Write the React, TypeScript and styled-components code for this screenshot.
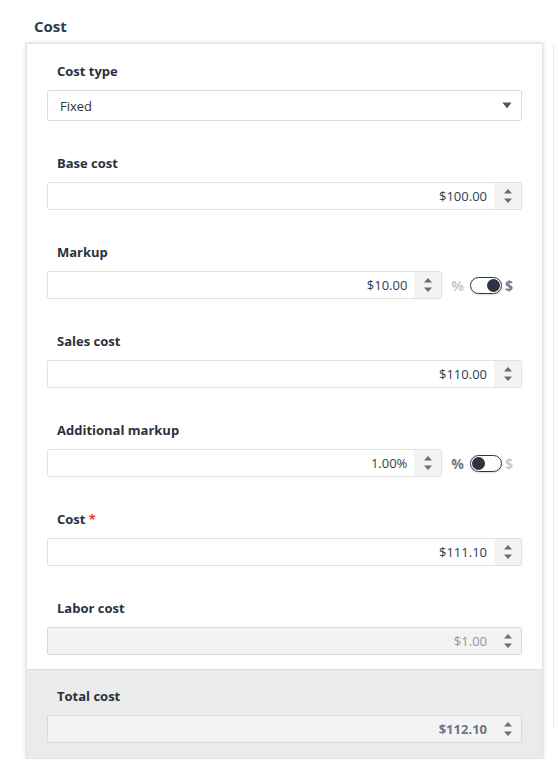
import React from "react";
import styled, { createGlobalStyle } from "styled-components";

const GlobalStyle = createGlobalStyle`
  html, body {
    margin: 0;
    padding: 0;
    background: #ffffff;
    font-family: "Open Sans", "Liberation Sans", Arial, sans-serif;
  }
  * {
    box-sizing: border-box;
  }
`;

interface FieldData {
  label: string;
  value: string;
  required?: boolean;
  disabled?: boolean;
  toggle?: "percent" | "dollar";
}

const fields: FieldData[] = [
  { label: "Base cost", value: "$100.00" },
  { label: "Markup", value: "$10.00", toggle: "dollar" },
  { label: "Sales cost", value: "$110.00" },
  { label: "Additional markup", value: "1.00%", toggle: "percent" },
  { label: "Cost", value: "$111.10", required: true },
  { label: "Labor cost", value: "$1.00", disabled: true },
];

const Spinner = () => (
  <SpinBox>
    <svg width="10" height="16" viewBox="0 0 10 16">
      <path d="M1 5.5 L5 1 L9 5.5 Z" fill="#6b6b6b" />
      <path d="M1 10.5 L5 15 L9 10.5 Z" fill="#6b6b6b" />
    </svg>
  </SpinBox>
);

const NumberInput = ({
  value,
  disabled,
  bold,
}: {
  value: string;
  disabled?: boolean;
  bold?: boolean;
}) => (
  <InputBox $disabled={disabled}>
    <Value $disabled={disabled} $bold={bold}>
      {value}
    </Value>
    <Spinner />
  </InputBox>
);

const Field = ({ f }: { f: FieldData }) => (
  <FieldBlock>
    <Label>
      {f.label}
      {f.required && <Star> *</Star>}
    </Label>
    {f.toggle ? (
      <Row>
        <NumberInput value={f.value} />
        <Unit $active={f.toggle === "percent"}>%</Unit>
        <Toggle>
          <Knob $right={f.toggle === "dollar"} />
        </Toggle>
        <Unit $active={f.toggle === "dollar"}>$</Unit>
      </Row>
    ) : (
      <NumberInput value={f.value} disabled={f.disabled} />
    )}
  </FieldBlock>
);

export default function App() {
  return (
    <>
      <GlobalStyle />
      <Page>
        <Column>
          <Heading>Cost</Heading>
          <Panel>
            <Body>
              <FirstBlock>
                <Label>Cost type</Label>
                <Select>
                  <span>Fixed</span>
                  <svg width="10" height="7" viewBox="0 0 10 7">
                    <path d="M0.5 0.5 L9.5 0.5 L5 6.5 Z" fill="#555555" />
                  </svg>
                </Select>
              </FirstBlock>
              {fields.map((f) => (
                <Field key={f.label} f={f} />
              ))}
            </Body>
            <Footer>
              <Label>Total cost</Label>
              <NumberInput value="$112.10" disabled bold />
            </Footer>
          </Panel>
        </Column>
        <SidePanel />
      </Page>
    </>
  );
}

const Page = styled.div`
  display: flex;
  width: 555px;
  overflow: hidden;
`;

const Column = styled.div`
  padding: 16px 0 0 26px;
  width: 543px;
  flex-shrink: 0;
`;

const SidePanel = styled.div`
  margin: 43px 0 0 10px;
  height: 685px;
  width: 20px;
  flex-shrink: 0;
  border-left: 1px solid #ececec;
`;

const Heading = styled.h2`
  margin: 0 0 7px 8px;
  font-size: 15px;
  line-height: 20px;
  font-weight: 700;
  color: #2e3a48;
`;

const Panel = styled.div`
  width: 517px;
  border: 1px solid #e2e2e2;
  background: #ffffff;
  box-shadow: 0 0 4px rgba(0, 0, 0, 0.18);
`;

const Body = styled.div`
  padding: 18px 20px 14px;
`;

const FirstBlock = styled.div`
  margin-bottom: 33px;
`;

const FieldBlock = styled.div`
  & + & {
    margin-top: 33px;
  }
`;

const Label = styled.div`
  padding-left: 10px;
  margin-bottom: 10px;
  font-size: 13px;
  line-height: 18px;
  font-weight: 700;
  color: #29313d;
`;

const Star = styled.span`
  color: #e53935;
`;

const Select = styled.div`
  height: 31px;
  display: flex;
  align-items: center;
  justify-content: space-between;
  padding: 0 9px 0 12px;
  border: 1px solid #dcdcdc;
  border-radius: 2px;
  font-size: 13px;
  color: #333333;
`;

const Row = styled.div`
  display: flex;
  align-items: center;
`;

const InputBox = styled.div<{ $disabled?: boolean }>`
  flex: 1;
  height: 28px;
  display: flex;
  align-items: stretch;
  border: 1px solid ${(p) => (p.$disabled ? "#dadada" : "#e2e2e2")};
  border-radius: 2px;
  background: ${(p) => (p.$disabled ? "#f3f3f3" : "#ffffff")};
`;

const Value = styled.div<{ $disabled?: boolean; $bold?: boolean }>`
  flex: 1;
  display: flex;
  align-items: center;
  justify-content: flex-end;
  padding-right: 7px;
  font-size: 13px;
  font-weight: ${(p) => (p.$bold ? 700 : 400)};
  color: ${(p) =>
    p.$bold ? "#6a7585" : p.$disabled ? "#8c96a3" : "#2c3e50"};
`;

const SpinBox = styled.div`
  width: 27px;
  display: flex;
  align-items: center;
  justify-content: center;
  background: #f3f3f3;
`;

const Unit = styled.span<{ $active?: boolean }>`
  font-size: 14px;
  font-weight: 700;
  color: ${(p) => (p.$active ? "#6e7a8a" : "#c6cbd3")};
  margin-left: 9px;
  margin-right: 0;
  &:last-child {
    margin-left: 3px;
    margin-right: 9px;
  }
`;

const Toggle = styled.div`
  width: 32px;
  height: 17px;
  margin-left: 6px;
  border: 1.5px solid #2c3542;
  border-radius: 9px;
  display: flex;
  align-items: center;
  padding: 0 1px;
  box-shadow: 0 1px 2px rgba(0, 0, 0, 0.15);
`;

const Knob = styled.div<{ $right?: boolean }>`
  width: 13px;
  height: 13px;
  border-radius: 50%;
  background: #2c3542;
  margin-left: ${(p) => (p.$right ? "auto" : "0")};
`;

const Footer = styled.div`
  padding: 17px 20px 15px;
  background: #ebebeb;
  border-top: 1px solid #dcdcdc;
`;
